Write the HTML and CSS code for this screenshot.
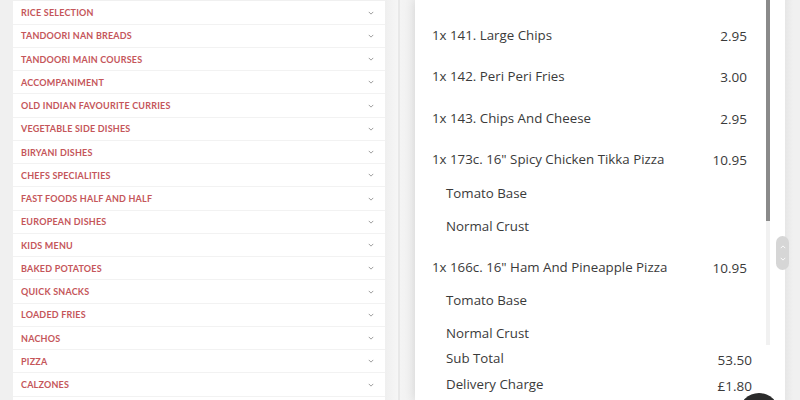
FILE: index.html
```html
<!DOCTYPE html>
<html>
<head>
<meta charset="utf-8">
<link rel="stylesheet" href="styles.css">
</head>
<body>
<div class="page">
  <div class="menu">
    <div class="cat"><span>RICE SELECTION</span><svg class="chev" viewBox="0 0 8 5"><path d="M1 1l3 3 3-3"/></svg></div>
    <div class="cat"><span>TANDOORI NAN BREADS</span><svg class="chev" viewBox="0 0 8 5"><path d="M1 1l3 3 3-3"/></svg></div>
    <div class="cat"><span>TANDOORI MAIN COURSES</span><svg class="chev" viewBox="0 0 8 5"><path d="M1 1l3 3 3-3"/></svg></div>
    <div class="cat"><span>ACCOMPANIMENT</span><svg class="chev" viewBox="0 0 8 5"><path d="M1 1l3 3 3-3"/></svg></div>
    <div class="cat"><span>OLD INDIAN FAVOURITE CURRIES</span><svg class="chev" viewBox="0 0 8 5"><path d="M1 1l3 3 3-3"/></svg></div>
    <div class="cat"><span>VEGETABLE SIDE DISHES</span><svg class="chev" viewBox="0 0 8 5"><path d="M1 1l3 3 3-3"/></svg></div>
    <div class="cat"><span>BIRYANI DISHES</span><svg class="chev" viewBox="0 0 8 5"><path d="M1 1l3 3 3-3"/></svg></div>
    <div class="cat"><span>CHEFS SPECIALITIES</span><svg class="chev" viewBox="0 0 8 5"><path d="M1 1l3 3 3-3"/></svg></div>
    <div class="cat"><span>FAST FOODS HALF AND HALF</span><svg class="chev" viewBox="0 0 8 5"><path d="M1 1l3 3 3-3"/></svg></div>
    <div class="cat"><span>EUROPEAN DISHES</span><svg class="chev" viewBox="0 0 8 5"><path d="M1 1l3 3 3-3"/></svg></div>
    <div class="cat"><span>KIDS MENU</span><svg class="chev" viewBox="0 0 8 5"><path d="M1 1l3 3 3-3"/></svg></div>
    <div class="cat"><span>BAKED POTATOES</span><svg class="chev" viewBox="0 0 8 5"><path d="M1 1l3 3 3-3"/></svg></div>
    <div class="cat"><span>QUICK SNACKS</span><svg class="chev" viewBox="0 0 8 5"><path d="M1 1l3 3 3-3"/></svg></div>
    <div class="cat"><span>LOADED FRIES</span><svg class="chev" viewBox="0 0 8 5"><path d="M1 1l3 3 3-3"/></svg></div>
    <div class="cat"><span>NACHOS</span><svg class="chev" viewBox="0 0 8 5"><path d="M1 1l3 3 3-3"/></svg></div>
    <div class="cat"><span>PIZZA</span><svg class="chev" viewBox="0 0 8 5"><path d="M1 1l3 3 3-3"/></svg></div>
    <div class="cat"><span>CALZONES</span><svg class="chev" viewBox="0 0 8 5"><path d="M1 1l3 3 3-3"/></svg></div>
    <div class="cat"><span>&nbsp;</span></div>
  </div>
  <div class="divider"></div>
  <div class="basket">
    <div class="scroll">
      <div class="items">
        <div class="item"><span>1x 141. Large Chips</span><span class="price">2.95</span></div>
        <div class="item"><span>1x 142. Peri Peri Fries</span><span class="price">3.00</span></div>
        <div class="item"><span>1x 143. Chips And Cheese</span><span class="price">2.95</span></div>
        <div class="item"><span>1x 173c. 16" Spicy Chicken Tikka Pizza</span><span class="price">10.95</span></div>
        <div class="opts">
          <div class="opt">Tomato Base</div>
          <div class="opt">Normal Crust</div>
        </div>
        <div class="item"><span>1x 166c. 16" Ham And Pineapple Pizza</span><span class="price">10.95</span></div>
        <div class="opts">
          <div class="opt">Tomato Base</div>
          <div class="opt">Normal Crust</div>
        </div>
      </div>
      <div class="track"><div class="thumb"></div></div>
    </div>
    <div class="totals">
      <div class="trow"><span>Sub Total</span><span class="tprice">53.50</span></div>
      <div class="trow"><span>Delivery Charge</span><span class="tprice">£1.80</span></div>
    </div>
  </div>
  <div class="side">
    <div class="pill">
      <svg viewBox="0 0 8 5"><path d="M1 4l3-3 3 3"/></svg>
      <svg viewBox="0 0 8 5"><path d="M1 1l3 3 3-3"/></svg>
    </div>
  </div>
  <div class="chat"></div>
</div>
</body>
</html>
```
FILE: styles.css
```css
html, body {
  margin: 0;
  padding: 0;
  background: #f0f0f0;
  overflow: hidden;
}
.page {
  display: flex;
  width: 800px;
  height: 400px;
  position: relative;
  overflow: hidden;
}
.menu {
  margin-left: 13px;
  width: 372px;
  background: #fff;
  font-family: Lato, "Liberation Sans", sans-serif;
  align-self: flex-start;
  margin-top: 0.4px;
  border-top: 1px solid #f0f0f0;
}
.cat {
  height: 22.25px;
  border-bottom: 1px solid #f2f2f2;
  display: flex;
  align-items: center;
  justify-content: space-between;
  padding: 0 8px 0 8px;
  font-size: 9px;
  font-weight: 700;
  letter-spacing: 0.2px;
  color: #c5565a;
}
.chev {
  width: 6px;
  height: 4px;
  fill: none;
  stroke: #888;
  stroke-width: 1.1;
  margin-right: 3px;
}
.divider {
  width: 30px;
  background: linear-gradient(to right, #efefef 0, #f6f6f6 13px, #e8e8e8 13px, #e8e8e8 15px, #f4f4f4 15px, #f0f0f0 30px);
}
.basket {
  width: 370px;
  background: #fff;
  box-shadow: 0 0 10px rgba(0,0,0,0.12);
  display: flex;
  flex-direction: column;
  font-family: "Open Sans", "Liberation Sans", sans-serif;
  color: #3a3a3a;
}
.scroll {
  height: 345px;
  display: flex;
  overflow: hidden;
}
.items {
  width: 315px;
  padding: 14px 0 0 17px;
}
.item {
  height: 41.5px;
  display: flex;
  justify-content: space-between;
  align-items: center;
  font-size: 13.3px;
}
.price {
  font-size: 13.5px;
  padding-top: 2px;
}
.opts {
  margin: -4px 0 4px 0;
}
.opt {
  height: 33px;
  display: flex;
  align-items: center;
  padding-left: 14px;
  font-size: 13.3px;
}
.track {
  margin-left: 19px;
  width: 4px;
  height: 345px;
  background: #f1f1f1;
}
.thumb {
  height: 221px;
  background: #8a8a8a;
}
.totals {
  padding: 0 33px 0 31px;
}
.trow {
  height: 26px;
  display: flex;
  justify-content: space-between;
  align-items: center;
  font-size: 13.3px;
}
.tprice {
  font-size: 13.5px;
  padding-top: 3px;
}
.side {
  flex: 1;
  background: linear-gradient(to right, #e6e6e6, #f0f0f0 8px);
  display: flex;
  flex-direction: column;
  align-items: center;
  padding-top: 236px;
}
.pill {
  width: 13px;
  height: 34px;
  border-radius: 7px;
  background: #d6d6d6;
  display: flex;
  flex-direction: column;
  align-items: center;
  justify-content: center;
  gap: 8px;
  margin-left: -20px;
}
.pill svg {
  width: 6px;
  height: 4px;
  fill: none;
  stroke: #fff;
  stroke-width: 1.2;
}
.chat {
  position: absolute;
  left: 739px;
  top: 393px;
  width: 40px;
  height: 40px;
  border-radius: 50%;
  background: #2b2b2b;
}
```
